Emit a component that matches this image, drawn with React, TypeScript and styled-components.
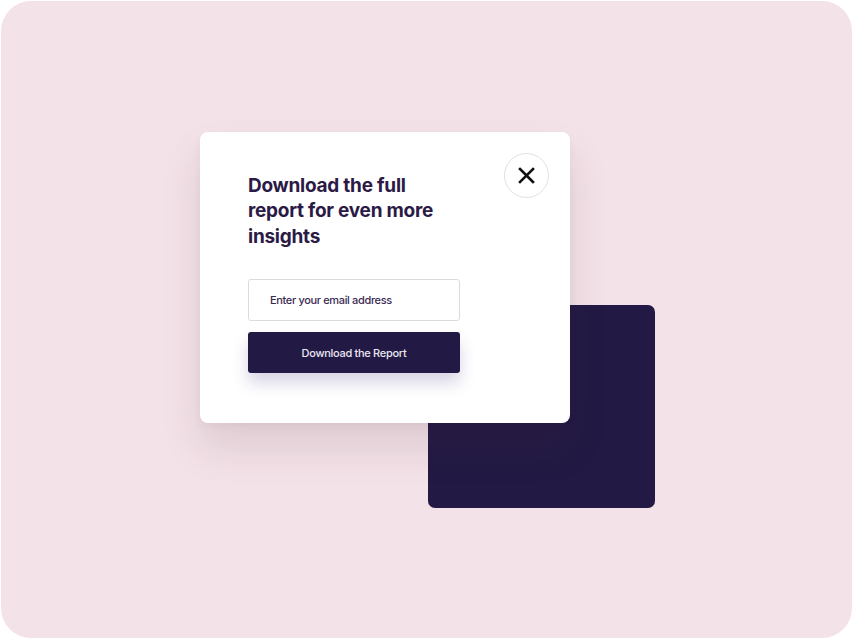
import styled, { createGlobalStyle } from "styled-components";

const GlobalStyle = createGlobalStyle`
  html, body {
    margin: 0;
    padding: 0;
    background: #ffffff;
  }
  * {
    box-sizing: border-box;
  }
`;

const Frame = styled.div`
  width: 853px;
  height: 639px;
  padding: 1px;
  background: #ffffff;
`;

const Canvas = styled.div`
  width: 100%;
  height: 100%;
  border-radius: 30px;
  background: #f3e2e8;
  display: flex;
  justify-content: center;
  align-items: center;
  font-family: "Inter", "Noto Sans", sans-serif;
`;

const Stage = styled.div`
  display: grid;
  grid-template-columns: 228px 142px 85px;
  grid-template-rows: 173px 118px 85px;
  transform: translate(1px, 0);
`;

const Modal = styled.div`
  grid-column: 1 / 3;
  grid-row: 1 / 3;
  z-index: 2;
  background: #ffffff;
  border-radius: 8px;
  padding: 21px 21px 50px 48px;
  box-shadow:
    0 24px 40px rgba(70, 30, 50, 0.12),
    0 4px 10px rgba(70, 30, 50, 0.04);
`;

const Backdrop = styled.div`
  grid-column: 2 / 4;
  grid-row: 2 / 4;
  z-index: 1;
  background: #221a44;
  border-radius: 7px;
`;

const Header = styled.div`
  display: flex;
  justify-content: space-between;
  align-items: flex-start;
`;

const Title = styled.h2`
  margin: 20px 0 0;
  max-width: 200px;
  font-size: 19px;
  line-height: 25.5px;
  font-weight: 700;
  color: #2c1a46;
  letter-spacing: -0.25px;
`;

const CloseButton = styled.button`
  width: 45px;
  height: 45px;
  border-radius: 50%;
  border: 1px solid #e2e0e4;
  background: #ffffff;
  display: flex;
  align-items: center;
  justify-content: center;
  padding: 0;
  cursor: pointer;
`;

const Form = styled.div`
  display: flex;
  flex-direction: column;
  gap: 11px;
  width: 212px;
  margin-top: 30px;
`;

const EmailInput = styled.div`
  height: 42px;
  border: 1px solid #dcdadf;
  border-radius: 3px;
  padding: 0 0 0 21px;
  display: flex;
  align-items: center;
  font-size: 11px;
  font-weight: 500;
  letter-spacing: -0.35px;
  color: #3a2a52;
`;

const SubmitButton = styled.button`
  height: 41px;
  border: none;
  border-radius: 3px;
  background: #221a44;
  color: #ebe6f2;
  font-family: inherit;
  font-size: 11px;
  font-weight: 500;
  letter-spacing: -0.3px;
  cursor: pointer;
  box-shadow: 0 10px 16px rgba(60, 40, 120, 0.2);
`;

function App() {
  return (
    <>
      <GlobalStyle />
      <Frame>
        <Canvas>
          <Stage>
            <Modal>
              <Header>
                <Title>Download the full report for even more insights</Title>
                <CloseButton aria-label="Close">
                  <svg width="17" height="17" viewBox="0 0 17 17">
                    <path
                      d="M2 2 L15 15 M15 2 L2 15"
                      stroke="#111111"
                      strokeWidth="2.6"
                      strokeLinecap="square"
                    />
                  </svg>
                </CloseButton>
              </Header>
              <Form>
                <EmailInput>Enter your email address</EmailInput>
                <SubmitButton>Download the Report</SubmitButton>
              </Form>
            </Modal>
            <Backdrop />
          </Stage>
        </Canvas>
      </Frame>
    </>
  );
}

export default App;
